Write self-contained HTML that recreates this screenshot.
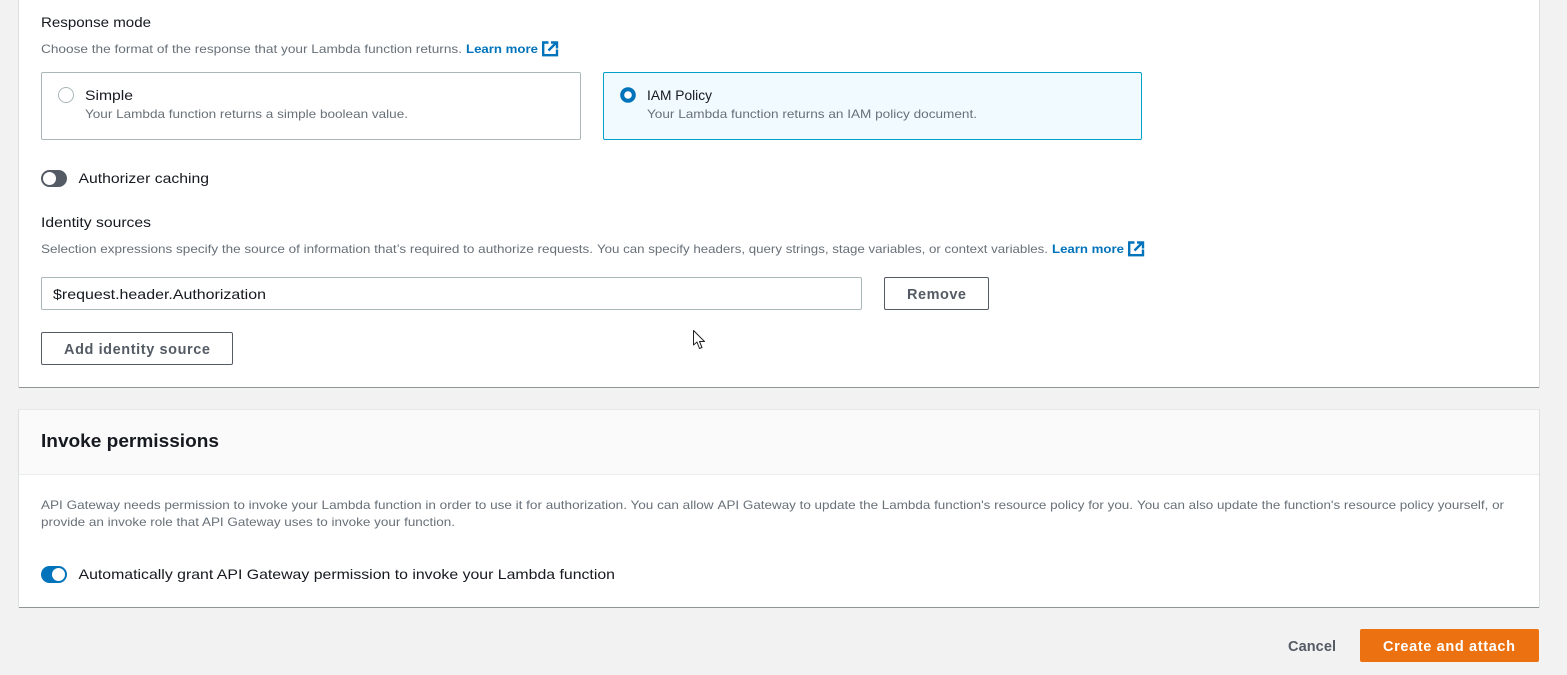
<!DOCTYPE html>
<html lang="en"><head><meta charset="utf-8"><title>Create authorizer</title>
<style>
html,body{margin:0;padding:0;width:1567px;height:675px;overflow:hidden;background:#f2f2f2}
svg{display:block}
text{font-family:"Liberation Sans",sans-serif;white-space:pre}
.d{fill:#16191f}.m{fill:#545b64}.g{fill:#687078}.l{fill:#0073bb;font-weight:700}.b{font-weight:700}
</style></head><body>
<svg width="1567" height="675" viewBox="0 0 1567 675" xmlns="http://www.w3.org/2000/svg">
<rect width="1567" height="675" fill="#f2f2f2"/>
<!-- card 1 -->
<rect x="18" y="-4" width="1522" height="392" fill="#dcdfdf"/>
<rect x="19" y="-4" width="1520" height="391" fill="#fff"/>
<rect x="19" y="387" width="1520" height="1" fill="#8f9596"/>
<!-- card 2 -->
<rect x="18" y="409.500" width="1522" height="198" fill="#dcdfdf"/>
<rect x="19" y="410" width="1520" height="197" fill="#fff"/>
<rect x="19" y="410" width="1520" height="64" fill="#fafafa"/>
<rect x="19" y="474" width="1520" height="1" fill="#eaeded"/>
<rect x="19" y="607" width="1520" height="1" fill="#8f9596"/>

<text class="d" x="41" y="27" font-size="14" textLength="110" lengthAdjust="spacingAndGlyphs">Response mode</text>
<text class="g" x="41" y="53" font-size="12" textLength="421" lengthAdjust="spacingAndGlyphs">Choose the format of the response that your Lambda function returns.</text>
<text class="l" x="466" y="53" font-size="12" textLength="72" lengthAdjust="spacingAndGlyphs">Learn more</text>
<g fill="none" stroke="#0073bb" stroke-width="2.400">
<path d="M548.500 42.500H543.200V55.200H557V49.500"/><path d="M548.500 50.500L556 43"/><path d="M551 42.500H557V48.500"/>
</g>

<rect x="41.500" y="72.500" width="539" height="67" rx="1.500" fill="#fff" stroke="#aab7b8"/>
<circle cx="66" cy="95" r="7.500" fill="#fff" stroke="#aab7b8"/>
<text class="d" x="85" y="100" font-size="14" textLength="48" lengthAdjust="spacingAndGlyphs">Simple</text>
<text class="g" x="85" y="118" font-size="12" textLength="323" lengthAdjust="spacingAndGlyphs">Your Lambda function returns a simple boolean value.</text>

<rect x="603.500" y="72.500" width="538" height="67" rx="1.500" fill="#f1faff" stroke="#00a1c9"/>
<circle cx="628" cy="95" r="5.800" fill="#fff" stroke="#0073bb" stroke-width="4"/>
<text class="d" x="647" y="100" font-size="14" textLength="65" lengthAdjust="spacingAndGlyphs">IAM Policy</text>
<text class="g" x="647" y="118" font-size="12" textLength="330" lengthAdjust="spacingAndGlyphs">Your Lambda function returns an IAM policy document.</text>

<rect x="41" y="170" width="26" height="17" rx="8.500" fill="#545b64"/>
<circle cx="49.500" cy="178.500" r="6.500" fill="#fff"/>
<text class="d" x="78.500" y="183" font-size="14" textLength="130.500" lengthAdjust="spacingAndGlyphs">Authorizer caching</text>

<text class="d" x="41" y="227" font-size="14" textLength="110" lengthAdjust="spacingAndGlyphs">Identity sources</text>
<text class="g" x="41" y="253" font-size="12" textLength="552" lengthAdjust="spacingAndGlyphs">Selection expressions specify the source of information that’s required to authorize requests.</text>
<text class="g" x="597" y="253" font-size="12" textLength="451" lengthAdjust="spacingAndGlyphs">You can specify headers, query strings, stage variables, or context variables.</text>
<text class="l" x="1052" y="253" font-size="12" textLength="72" lengthAdjust="spacingAndGlyphs">Learn more</text>
<g fill="none" stroke="#0073bb" stroke-width="2.400">
<path d="M1134.500 242.500H1129.200V255.200H1143V249.500"/><path d="M1134.500 250.500L1142 243"/><path d="M1137 242.500H1143V248.500"/>
</g>

<rect x="41.500" y="277.500" width="820" height="32" rx="1.500" fill="#fff" stroke="#aab7b8"/>
<text class="d" x="53" y="299" font-size="14" textLength="213" lengthAdjust="spacingAndGlyphs">$request.header.Authorization</text>
<rect x="884.500" y="277.500" width="104" height="32" rx="1.500" fill="#fff" stroke="#545b64"/>
<text class="m b" x="907" y="299" font-size="14.500" textLength="59" lengthAdjust="spacing">Remove</text>
<rect x="41.500" y="332.500" width="191" height="32" rx="1.500" fill="#fff" stroke="#545b64"/>
<text class="m b" x="64" y="354" font-size="14.500" textLength="146" lengthAdjust="spacing">Add identity source</text>

<path d="M693.500 330.500V345L697 342L699.500 348.500L702 347.500L699.500 341.500H704.500Z" fill="#fff" stroke="#222" stroke-width="1" stroke-linejoin="round"/>

<text class="d b" x="41" y="447" font-size="18" textLength="178" lengthAdjust="spacingAndGlyphs">Invoke permissions</text>
<text class="g" x="41" y="509" font-size="12" textLength="672.500" lengthAdjust="spacingAndGlyphs">API Gateway needs permission to invoke your Lambda function in order to use it for authorization. You can allow</text>
<text class="g" x="717.500" y="509" font-size="12" textLength="415.500" lengthAdjust="spacingAndGlyphs">API Gateway to update the Lambda function's resource policy for you.</text>
<text class="g" x="1137" y="509" font-size="12" textLength="367" lengthAdjust="spacingAndGlyphs">You can also update the function's resource policy yourself, or</text>
<text class="g" x="41" y="526" font-size="12" textLength="414" lengthAdjust="spacingAndGlyphs">provide an invoke role that API Gateway uses to invoke your function.</text>

<rect x="41" y="566" width="26" height="17" rx="8.500" fill="#0073bb"/>
<circle cx="58.500" cy="574.500" r="6.500" fill="#fff"/>
<text class="d" x="78.500" y="579" font-size="14" textLength="536.500" lengthAdjust="spacingAndGlyphs">Automatically grant API Gateway permission to invoke your Lambda function</text>

<text class="m b" x="1288" y="651" font-size="14.500" textLength="48" lengthAdjust="spacing">Cancel</text>
<rect x="1360" y="629" width="179" height="33" rx="2" fill="#ec7211"/>
<text class="b" fill="#fff" x="1383" y="651" font-size="14.500" textLength="132" lengthAdjust="spacing">Create and attach</text>
</svg>
</body></html>
